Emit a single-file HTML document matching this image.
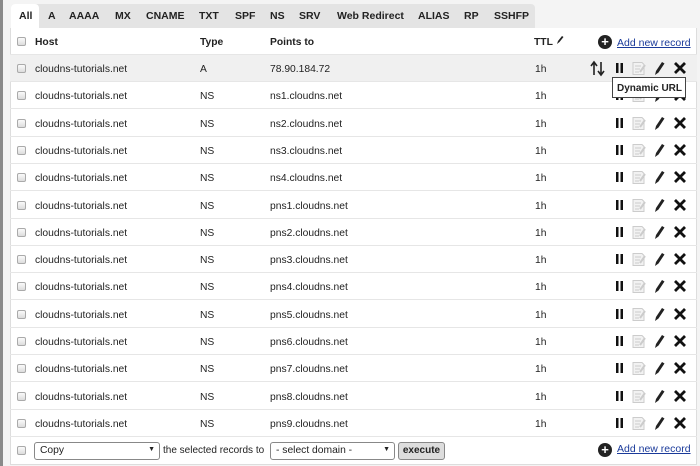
<!DOCTYPE html>
<html><head><meta charset="utf-8"><style>
*{box-sizing:border-box;margin:0;padding:0}
body{width:700px;height:466px;overflow:hidden;background:#f4f4f4;font-family:"Liberation Sans",sans-serif;font-size:10.3px;color:#222;position:relative}
.lbar{position:absolute;left:0;top:0;width:3px;height:466px;background:#8a8a8a}
.tabs{position:absolute;left:11px;top:4px;width:524px;height:24px;background:#e4e4e4;border-radius:4px 4px 0 0}
.tab{position:absolute;top:10px;font-weight:bold;font-size:10.5px;color:#222}
.act{position:absolute;left:11px;top:4px;width:28px;height:25px;background:#fff;border-radius:4px 4px 0 0}
.panel{position:absolute;left:10px;top:28px;width:687px;height:437px;background:#fff;border:1px solid #ddd;border-top:none}
.row{position:absolute;left:10px;width:687px;height:27px;border-bottom:1px solid #e6e6e6}
.row span{position:absolute;top:9px}
.cb{position:absolute;left:7px;top:9px;width:9px;height:9px;border:1px solid #aaa;border-radius:2px;background:linear-gradient(#fafafa,#ddd)}
.h span{font-weight:bold}
.ic{position:absolute;top:6px}
a{color:#1a3a9a;text-decoration:underline;font-size:10.5px}
.plus{position:absolute;width:14px;height:14px;border-radius:50%;background:#222;color:#fff;font-weight:bold;font-size:13px;line-height:14px;text-align:center}
.sel{position:absolute;top:442px;height:18px;border:1px solid #888;border-radius:3px;background:#fff;font-size:10.3px;padding:2px 5px}
</style></head><body>
<svg width="0" height="0" style="position:absolute"><defs>
<g id="ic">
<rect x="0" y="2" width="2.5" height="10" fill="#111"/><rect x="4.5" y="2" width="2.5" height="10" fill="#111"/>
<path d="M17 1.5h9l2 2v10h-11z" fill="#f2f2f2" stroke="#ccc"/><path d="M19 5h6M19 8h5M19 11h4" stroke="#ccc"/><path d="M24 11l5-7" stroke="#ccc" stroke-width="2"/>
<path d="M39 14l1-4 6-9 2.5 1.5-6 9z" fill="#222"/>
<path d="M59 2l10 10M69 2l-10 10" stroke="#111" stroke-width="2.8"/>
</g></defs></svg>

<div class="lbar"></div>
<div class="tabs"></div>
<div class="act"></div>
<span class="tab" style="left:19px">All</span>
<span class="tab" style="left:48px">A</span>
<span class="tab" style="left:69px">AAAA</span>
<span class="tab" style="left:115px">MX</span>
<span class="tab" style="left:146px">CNAME</span>
<span class="tab" style="left:199px">TXT</span>
<span class="tab" style="left:235px">SPF</span>
<span class="tab" style="left:270px">NS</span>
<span class="tab" style="left:299px">SRV</span>
<span class="tab" style="left:337px">Web Redirect</span>
<span class="tab" style="left:418px">ALIAS</span>
<span class="tab" style="left:464px">RP</span>
<span class="tab" style="left:494px">SSHFP</span>
<div class="panel"></div>

<div class="row h" style="top:28px"><div class="cb"></div><span style="left:25px">Host</span><span style="left:190px">Type</span><span style="left:260px">Points to</span><span style="left:524px">TTL</span>
<svg style="position:absolute;left:546px;top:7px" width="8" height="10"><path d="M1 9l1-3 4-5 1.5 1-4 5z" fill="#222"/></svg>
<div class="plus" style="left:588px;top:7px">+</div><span style="left:607px;font-weight:normal"><a>Add new record</a></span></div>

<div class="row" style="top:55px;background:#f0f0f0"><div class="cb"></div><span style="left:25px">cloudns-tutorials.net</span><span style="left:190px">A</span><span style="left:260px">78.90.184.72</span><span style="left:525px">1h</span>
<svg style="position:absolute;left:580px;top:5px" width="16" height="17"><path d="M4 15V3M1 6l3-4 3 4M11 2v12M8 11l3 4 3-4" stroke="#222" stroke-width="1.6" fill="none"/></svg>
<svg class="ic" style="left:606px" width="72" height="15"><use href="#ic"/></svg></div>

<div style="position:absolute;left:612px;top:77px;width:74px;height:21px;background:#fff;border:1px solid #444;font-weight:bold;font-size:10px;padding:5px 4px;z-index:5;white-space:nowrap">Dynamic URL</div>

<div class="row" style="top:82.3px"><div class="cb"></div><span style="left:25px">cloudns-tutorials.net</span><span style="left:190px">NS</span><span style="left:260px">ns1.cloudns.net</span><span style="left:525px">1h</span><svg class="ic" style="left:606px" width="72" height="15"><use href="#ic"/></svg></div>
<div class="row" style="top:109.6px"><div class="cb"></div><span style="left:25px">cloudns-tutorials.net</span><span style="left:190px">NS</span><span style="left:260px">ns2.cloudns.net</span><span style="left:525px">1h</span><svg class="ic" style="left:606px" width="72" height="15"><use href="#ic"/></svg></div>
<div class="row" style="top:136.9px"><div class="cb"></div><span style="left:25px">cloudns-tutorials.net</span><span style="left:190px">NS</span><span style="left:260px">ns3.cloudns.net</span><span style="left:525px">1h</span><svg class="ic" style="left:606px" width="72" height="15"><use href="#ic"/></svg></div>
<div class="row" style="top:164.2px"><div class="cb"></div><span style="left:25px">cloudns-tutorials.net</span><span style="left:190px">NS</span><span style="left:260px">ns4.cloudns.net</span><span style="left:525px">1h</span><svg class="ic" style="left:606px" width="72" height="15"><use href="#ic"/></svg></div>
<div class="row" style="top:191.5px"><div class="cb"></div><span style="left:25px">cloudns-tutorials.net</span><span style="left:190px">NS</span><span style="left:260px">pns1.cloudns.net</span><span style="left:525px">1h</span><svg class="ic" style="left:606px" width="72" height="15"><use href="#ic"/></svg></div>
<div class="row" style="top:218.8px"><div class="cb"></div><span style="left:25px">cloudns-tutorials.net</span><span style="left:190px">NS</span><span style="left:260px">pns2.cloudns.net</span><span style="left:525px">1h</span><svg class="ic" style="left:606px" width="72" height="15"><use href="#ic"/></svg></div>
<div class="row" style="top:246.1px"><div class="cb"></div><span style="left:25px">cloudns-tutorials.net</span><span style="left:190px">NS</span><span style="left:260px">pns3.cloudns.net</span><span style="left:525px">1h</span><svg class="ic" style="left:606px" width="72" height="15"><use href="#ic"/></svg></div>
<div class="row" style="top:273.4px"><div class="cb"></div><span style="left:25px">cloudns-tutorials.net</span><span style="left:190px">NS</span><span style="left:260px">pns4.cloudns.net</span><span style="left:525px">1h</span><svg class="ic" style="left:606px" width="72" height="15"><use href="#ic"/></svg></div>
<div class="row" style="top:300.7px"><div class="cb"></div><span style="left:25px">cloudns-tutorials.net</span><span style="left:190px">NS</span><span style="left:260px">pns5.cloudns.net</span><span style="left:525px">1h</span><svg class="ic" style="left:606px" width="72" height="15"><use href="#ic"/></svg></div>
<div class="row" style="top:328px"><div class="cb"></div><span style="left:25px">cloudns-tutorials.net</span><span style="left:190px">NS</span><span style="left:260px">pns6.cloudns.net</span><span style="left:525px">1h</span><svg class="ic" style="left:606px" width="72" height="15"><use href="#ic"/></svg></div>
<div class="row" style="top:355.3px"><div class="cb"></div><span style="left:25px">cloudns-tutorials.net</span><span style="left:190px">NS</span><span style="left:260px">pns7.cloudns.net</span><span style="left:525px">1h</span><svg class="ic" style="left:606px" width="72" height="15"><use href="#ic"/></svg></div>
<div class="row" style="top:382.6px"><div class="cb"></div><span style="left:25px">cloudns-tutorials.net</span><span style="left:190px">NS</span><span style="left:260px">pns8.cloudns.net</span><span style="left:525px">1h</span><svg class="ic" style="left:606px" width="72" height="15"><use href="#ic"/></svg></div>
<div class="row" style="top:409.9px"><div class="cb"></div><span style="left:25px">cloudns-tutorials.net</span><span style="left:190px">NS</span><span style="left:260px">pns9.cloudns.net</span><span style="left:525px">1h</span><svg class="ic" style="left:606px" width="72" height="15"><use href="#ic"/></svg></div>

<div class="cb" style="top:446px;left:17px"></div>
<div class="sel" style="left:34px;width:126px">Copy<span style="position:absolute;right:4px;top:3px;font-size:7px">&#x25BC;</span></div>
<span style="position:absolute;left:163px;top:445px;font-size:10px;white-space:nowrap">the selected records to</span>
<div class="sel" style="left:270px;width:125px">- select domain -<span style="position:absolute;right:4px;top:3px;font-size:7px">&#x25BC;</span></div>
<div class="sel" style="left:398px;width:47px;background:#ddd;font-weight:bold;padding:2px 3px;font-size:10px;text-align:center">execute</div>
<div class="plus" style="left:598px;top:443px">+</div>
<span style="position:absolute;left:617px;top:443px"><a>Add new record</a></span>
</body></html>
